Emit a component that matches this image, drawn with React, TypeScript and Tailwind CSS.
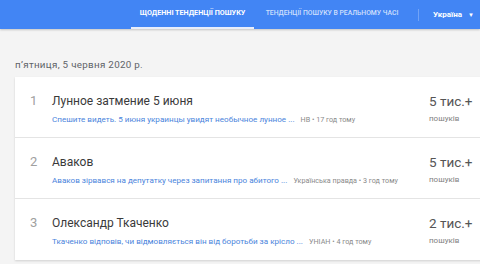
import React from 'react';

const rows = [
  {
    n: 1,
    title: 'Лунное затмение 5 июня',
    link: 'Спешите видеть. 5 июня украинцы увидят необычное лунное ...',
    source: 'НВ • 17 год тому',
    count: '5 тис.+',
  },
  {
    n: 2,
    title: 'Аваков',
    link: 'Аваков зірвався на депутатку через запитання про абитого ...',
    source: 'Українська правда • 3 год тому',
    count: '5 тис.+',
  },
  {
    n: 3,
    title: 'Олександр Ткаченко',
    link: 'Ткаченко відповів, чи відмовляється він від боротьби за крісло ...',
    source: 'УНІАН • 4 год тому',
    count: '2 тис.+',
  },
];

const App = () => {
  return (
    <div className="w-[480px] h-[264px] overflow-hidden bg-[#f4f4f4] font-['Roboto',sans-serif]">
      <header className="h-[29px] bg-[#4285f4] flex items-stretch pl-[131px] shadow-[0_1px_2px_rgba(0,0,0,0.2)]">
        <div className="w-[123px] shrink-0 flex items-center justify-center border-b-[2px] border-[#e8eefb]">
          <span className="text-[7.2px] font-bold text-white whitespace-nowrap">
            ЩОДЕННІ ТЕНДЕНЦІЇ ПОШУКУ
          </span>
        </div>
        <div className="w-[156px] shrink-0 flex items-center justify-center border-b-[2px] border-transparent">
          <span className="text-[6.8px] font-medium text-white/75 whitespace-nowrap">
            ТЕНДЕНЦІЇ ПОШУКУ В РЕАЛЬНОМУ ЧАСІ
          </span>
        </div>
        <div className="flex items-center">
          <div className="w-px h-[12px] bg-white/25 ml-[8px]" />
          <span className="ml-[14px] text-[8px] font-bold text-white whitespace-nowrap">Україна</span>
          <span className="ml-[6px] text-[6px] text-white">▼</span>
        </div>
      </header>

      <div className="pl-[15px]">
        <div className="h-[48px] pt-[30px] text-[9.8px] tracking-[0.3px] leading-[12px] text-[#5f6368] whitespace-nowrap">
          п’ятниця, 5 червня 2020 р.
        </div>
        <div className="w-[480px] bg-white shadow-[0_1px_2px_rgba(0,0,0,0.15)]">
          {rows.map((r, i) => (
            <div
              key={r.n}
              className={`h-[61px] flex ${i < rows.length - 1 ? 'border-b border-[#e4e4e4]' : ''}`}
            >
              <div className="w-[37px] pt-[16px] pl-[15px] text-[13px] leading-[16px] text-[#a0a0a0]">
                {r.n}
              </div>
              <div className="flex-1 pt-[16px] min-w-0">
                <div className="text-[12px] leading-[16px] text-[#3a3a3a] whitespace-nowrap">{r.title}</div>
                <div className="mt-[4px] text-[8.1px] leading-[12px] whitespace-nowrap">
                  <span className="text-[#4a84dc]">{r.link}</span>
                  <span className="ml-[6px] text-[#8a8a8a] text-[7.2px]">{r.source}</span>
                </div>
              </div>
              <div className="w-[66px] pt-[16px]">
                <div className="text-[13.5px] leading-[16px] text-[#555555] whitespace-nowrap">{r.count}</div>
                <div className="mt-[4px] text-[8px] leading-[12px] text-[#808080]">пошуків</div>
              </div>
            </div>
          ))}
        </div>
      </div>
    </div>
  );
};

export default App;
